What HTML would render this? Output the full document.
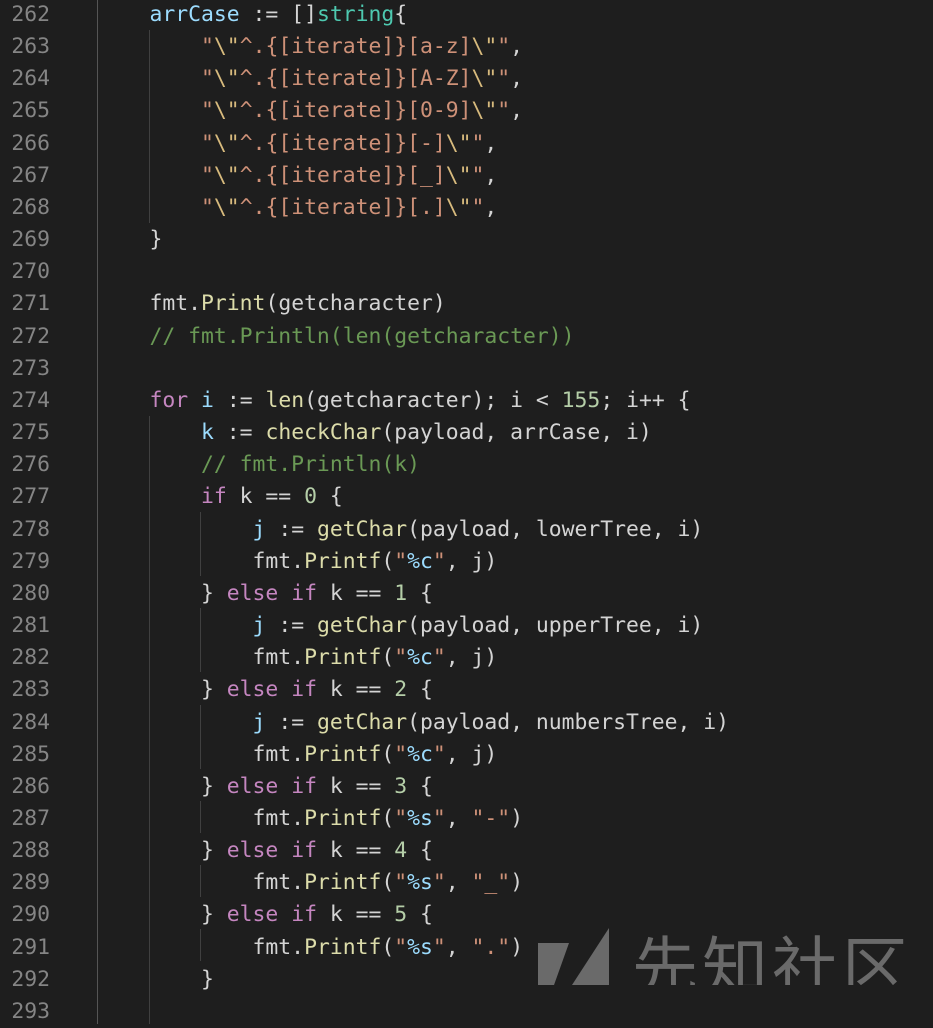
<!DOCTYPE html>
<html><head><meta charset="utf-8"><style>
body{margin:0;width:933px;height:1024px;background:#1e1e1e;overflow:hidden;position:relative;font-family:"DejaVu Sans Mono","Liberation Mono",monospace;font-size:21.4px;color:#d4d4d4}
.ln{position:absolute;left:0;width:50px;text-align:right;color:#858585;height:32.16px;line-height:32.16px}
.c{position:absolute;left:98px;white-space:pre;height:32.16px;line-height:32.16px}
.g{position:absolute;width:1px;background:#404040}
.v{color:#9cdcfe}.t{color:#4ec9b0}.s{color:#ce9178}.e{color:#d7ba7d}.f{color:#dcdcaa}.k{color:#c586c0}.cm{color:#6a9955}.n{color:#b5cea8}
.wm{position:absolute;left:632px;top:922px;font-family:"Noto Sans CJK SC",sans-serif;font-size:66px;color:#6a6a6a;letter-spacing:4px;height:63px;overflow:hidden;line-height:82px;white-space:nowrap}
</style></head><body>
<div class="g" style="left:97px;top:0;height:1024px;background:#555"></div>
<div class="g" style="left:149px;top:30px;height:193px"></div>
<div class="g" style="left:149px;top:416px;height:608px"></div>
<div class="g" style="left:200px;top:512px;height:64px"></div>
<div class="g" style="left:200px;top:608px;height:64px"></div>
<div class="g" style="left:200px;top:705px;height:64px"></div>
<div class="g" style="left:200px;top:801px;height:32px"></div>
<div class="g" style="left:200px;top:865px;height:32px"></div>
<div class="g" style="left:200px;top:929px;height:32px"></div>
<div id="L"></div>
<script>
var lines=[
'    <span class=v>arrCase</span> := []<span class=t>string</span>{',
'        <span class=s>"<span class=e>\\"</span>^.{[iterate]}[a-z]<span class=e>\\"</span>"</span>,',
'        <span class=s>"<span class=e>\\"</span>^.{[iterate]}[A-Z]<span class=e>\\"</span>"</span>,',
'        <span class=s>"<span class=e>\\"</span>^.{[iterate]}[0-9]<span class=e>\\"</span>"</span>,',
'        <span class=s>"<span class=e>\\"</span>^.{[iterate]}[-]<span class=e>\\"</span>"</span>,',
'        <span class=s>"<span class=e>\\"</span>^.{[iterate]}[_]<span class=e>\\"</span>"</span>,',
'        <span class=s>"<span class=e>\\"</span>^.{[iterate]}[.]<span class=e>\\"</span>"</span>,',
'    }',
'',
'    fmt.<span class=f>Print</span>(getcharacter)',
'    <span class=cm>// fmt.Println(len(getcharacter))</span>',
'',
'    <span class=k>for</span> <span class=v>i</span> := <span class=f>len</span>(getcharacter); i &lt; <span class=n>155</span>; i++ {',
'        <span class=v>k</span> := <span class=f>checkChar</span>(payload, arrCase, i)',
'        <span class=cm>// fmt.Println(k)</span>',
'        <span class=k>if</span> k == <span class=n>0</span> {',
'            <span class=v>j</span> := <span class=f>getChar</span>(payload, lowerTree, i)',
'            fmt.<span class=f>Printf</span>(<span class=s>"<span class=v>%c</span>"</span>, j)',
'        } <span class=k>else</span> <span class=k>if</span> k == <span class=n>1</span> {',
'            <span class=v>j</span> := <span class=f>getChar</span>(payload, upperTree, i)',
'            fmt.<span class=f>Printf</span>(<span class=s>"<span class=v>%c</span>"</span>, j)',
'        } <span class=k>else</span> <span class=k>if</span> k == <span class=n>2</span> {',
'            <span class=v>j</span> := <span class=f>getChar</span>(payload, numbersTree, i)',
'            fmt.<span class=f>Printf</span>(<span class=s>"<span class=v>%c</span>"</span>, j)',
'        } <span class=k>else</span> <span class=k>if</span> k == <span class=n>3</span> {',
'            fmt.<span class=f>Printf</span>(<span class=s>"<span class=v>%s</span>"</span>, <span class=s>"-"</span>)',
'        } <span class=k>else</span> <span class=k>if</span> k == <span class=n>4</span> {',
'            fmt.<span class=f>Printf</span>(<span class=s>"<span class=v>%s</span>"</span>, <span class=s>"_"</span>)',
'        } <span class=k>else</span> <span class=k>if</span> k == <span class=n>5</span> {',
'            fmt.<span class=f>Printf</span>(<span class=s>"<span class=v>%s</span>"</span>, <span class=s>"."</span>)',
'        }',
''];
var h='';
for(var i=0;i<lines.length;i++){var y=(-1+32.16*i).toFixed(2);
h+='<div class=ln style="top:'+y+'px">'+(262+i)+'</div><div class=c style="top:'+y+'px">'+lines[i]+'</div>';}
document.getElementById('L').innerHTML=h;
</script>
<svg style="position:absolute;left:538px;top:928px" width="74" height="58"><polygon points="0,15 31,15 16,57 0,57" fill="#6a6a6a"/><polygon points="71,0 71,57 34,57" fill="#6a6a6a"/></svg>
<div class="wm">先知社区</div>
</body></html>
